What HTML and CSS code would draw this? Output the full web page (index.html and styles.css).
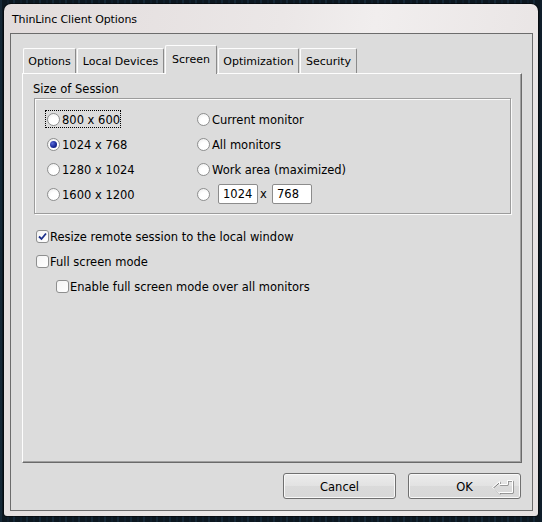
FILE: index.html
```html
<!DOCTYPE html>
<html>
<head>
<meta charset="utf-8">
<title>ThinLinc Client Options</title>
<link rel="stylesheet" href="styles.css">
</head>
<body>
<div class="window">
  <div class="titlebar">ThinLinc Client Options</div>
  <div class="client">
    <div class="tabs">
      <div class="tab tab-options">Options</div>
      <div class="tab tab-local">Local Devices</div>
      <div class="tab tab-screen selected">Screen</div>
      <div class="tab tab-opt">Optimization</div>
      <div class="tab tab-sec">Security</div>
    </div>
    <div class="panel">
      <div class="group-label">Size of Session</div>
      <div class="group">
        <div class="grid">
          <div class="item focus"><span class="radio"></span><span class="label">800 x 600</span></div>
          <div class="item"><span class="radio"></span><span class="label">Current monitor</span></div>
          <div class="item"><span class="radio checked"></span><span class="label">1024 x 768</span></div>
          <div class="item"><span class="radio"></span><span class="label">All monitors</span></div>
          <div class="item"><span class="radio"></span><span class="label">1280 x 1024</span></div>
          <div class="item"><span class="radio"></span><span class="label">Work area (maximized)</span></div>
          <div class="item"><span class="radio"></span><span class="label">1600 x 1200</span></div>
          <div class="item custom"><span class="radio"></span><span class="field">1024</span><span class="times">x</span><span class="field">768</span></div>
        </div>
      </div>
      <div class="checks">
        <div class="check-row"><span class="checkbox checked"><svg width="9" height="9" viewBox="0 0 9 9"><path d="M1 4.5 L3.5 7 L8 1.5" fill="none" stroke="#1b2f8c" stroke-width="1.8"/></svg></span><span class="label">Resize remote session to the local window</span></div>
        <div class="check-row"><span class="checkbox"></span><span class="label">Full screen mode</span></div>
        <div class="check-row indent"><span class="checkbox"></span><span class="label">Enable full screen mode over all monitors</span></div>
      </div>
    </div>
    <div class="buttons">
      <div class="button">Cancel</div>
      <div class="button ok">OK
        <svg class="enter" width="24" height="16" viewBox="0 0 24 16"><path d="M1.5 8.5 L8.5 2.5 L8.5 5.5 L16.5 5.5 L16.5 1.5 L21.5 1.5 L21.5 13.5 L8.5 13.5 L8.5 14.5 Z" fill="none" stroke="#7a7a7a" stroke-width="1" transform="translate(0.7,0.7)"/><path d="M1.5 8.5 L8.5 2.5 L8.5 5.5 L16.5 5.5 L16.5 1.5 L21.5 1.5 L21.5 13.5 L8.5 13.5 L8.5 14.5 Z" fill="none" stroke="#ffffff" stroke-width="1"/></svg>
      </div>
    </div>
  </div>
</div>
</body>
</html>
```
FILE: styles.css
```css
html, body {
  margin: 0;
  padding: 0;
}
body {
  width: 542px;
  height: 522px;
  overflow: hidden;
  background: #0c1720;
  background-image: repeating-linear-gradient(90deg, rgba(60,110,150,0.18) 0 2px, transparent 2px 7px, rgba(40,80,120,0.12) 7px 9px, transparent 9px 13px);
  font-family: "DejaVu Sans", Verdana, sans-serif;
  font-size: 11.5px;
  color: #000;
}
.window {
  margin: 4px 0 0 4px;
  width: 534px;
  height: 512px;
  box-sizing: border-box;
  border-radius: 7px 7px 3px 3px;
  background: linear-gradient(100deg, #e2dcdc 0%, #ebe7e7 45%, #f1eeee 60%, #e6e1e1 100%);
  box-shadow: 0 0 0 1px rgba(0,0,0,0.5);
  display: flex;
  flex-direction: column;
}
.titlebar {
  height: 29px;
  box-sizing: border-box;
  padding: 9px 0 0 8px;
  font-size: 11px;
  line-height: 13px;
  color: #000;
  letter-spacing: -0.1px;
}
.client {
  margin-left: 6px;
  width: 523px;
  height: 478px;
  box-sizing: border-box;
  border: 1px solid #6c6c6c;
  background: #dcdcdc;
  padding: 11px 10px 0 12px;
  display: flex;
  flex-direction: column;
}
.tabs {
  display: flex;
  align-items: flex-end;
  gap: 1px;
  height: 28px;
  font-size: 11px;
}
.tab {
  height: 25px;
  box-sizing: border-box;
  border-top: 1px solid #fdfdfd;
  border-left: 1px solid #fdfdfd;
  border-right: 1px solid #8a8a8a;
  border-radius: 2px 2px 0 0;
  display: flex;
  align-items: center;
  justify-content: center;
  padding-top: 1px;
  white-space: nowrap;
}
.tab.selected {
  height: 29px;
  margin-bottom: -1px;
  position: relative;
  z-index: 1;
  background: #dcdcdc;
  padding-bottom: 3px;
}
.tab-options { width: 53px; }
.tab-local { width: 87px; }
.tab-screen { width: 52px; }
.tab-opt { width: 81px; }
.tab-sec { width: 57px; }

.panel {
  margin-left: -1px;
  width: 500px;
  height: 390px;
  box-sizing: border-box;
  border-top: 1px solid #fdfdfd;
  border-left: 1px solid #fdfdfd;
  border-right: 1px solid #6a6a6a;
  border-bottom: 1px solid #6a6a6a;
  box-shadow: inset -1px -1px 0 #a0a0a0;
  padding: 8px 0 0 10px;
}
.group-label {
  line-height: 14px;
  height: 14px;
}
.group {
  margin: 2px 0 0 1px;
  width: 477px;
  height: 116px;
  box-sizing: border-box;
  border: 1px solid #9c9c9c;
  box-shadow: inset 1px 1px 0 #fbfbfb, 1px 1px 0 #fbfbfb;
  padding: 11px 0 0 10px;
}
.grid {
  display: grid;
  grid-template-columns: 150px auto;
  grid-auto-rows: 18px;
  row-gap: 7px;
}
.item {
  display: flex;
  align-items: center;
  padding-left: 2px;
  height: 18px;
  box-sizing: border-box;
  white-space: nowrap;
}
.label {
  line-height: 14px;
  padding-top: 2px;
}
.item.focus {
  justify-self: start;
  outline: 1px dotted #000;
  outline-offset: -1px;
  padding-right: 1px;
}
.radio {
  width: 13px;
  height: 13px;
  box-sizing: border-box;
  border-radius: 50%;
  border: 1px solid #8e8f8f;
  background: radial-gradient(circle at 60% 65%, #ffffff 0 40%, #e8e8e8 100%);
  margin-right: 2px;
  flex: none;
  display: flex;
  align-items: center;
  justify-content: center;
}
.radio.checked::after {
  content: "";
  width: 7px;
  height: 7px;
  border-radius: 50%;
  background: radial-gradient(circle at 35% 35%, #5a6ad8 0, #1a2a9a 55%, #0c1560 100%);
}
.item.custom {
  height: 20px;
  align-self: center;
}
.field {
  width: 40px;
  height: 20px;
  box-sizing: border-box;
  border: 1px solid #8c8c8c;
  border-radius: 2px;
  background: #fff;
  padding-left: 4px;
  line-height: 18px;
}
.custom .radio { margin-right: 8px; }
.times {
  width: 14px;
  text-align: left;
  padding-left: 2px;
  box-sizing: border-box;
}
.checks {
  margin-top: 13px;
  margin-left: 3px;
  display: flex;
  flex-direction: column;
  gap: 7px;
}
.check-row {
  display: flex;
  align-items: center;
  height: 18px;
  white-space: nowrap;
}
.check-row.indent { padding-left: 20px; }
.checkbox {
  width: 13px;
  height: 13px;
  box-sizing: border-box;
  border: 1px solid #8e8f8f;
  border-radius: 3px;
  background: linear-gradient(135deg, #f4f4f4, #ffffff);
  margin-right: 1px;
  flex: none;
  display: flex;
  align-items: center;
  justify-content: center;
}
.buttons {
  margin-top: 10px;
  display: flex;
  justify-content: flex-end;
  gap: 12px;
  padding-right: 1px;
  font-size: 11.5px;
}
.button {
  width: 113px;
  height: 26px;
  box-sizing: border-box;
  border: 1px solid #707070;
  border-radius: 3px;
  background: linear-gradient(#ececec, #e2e2e2 50%, #dadada 51%, #d8d8d8);
  box-shadow: inset 0 0 0 1px #f8f8f8;
  display: flex;
  align-items: center;
  justify-content: center;
  padding-top: 2px;
  position: relative;
}
.enter {
  position: absolute;
  right: 5px;
  top: 5px;
}
```
